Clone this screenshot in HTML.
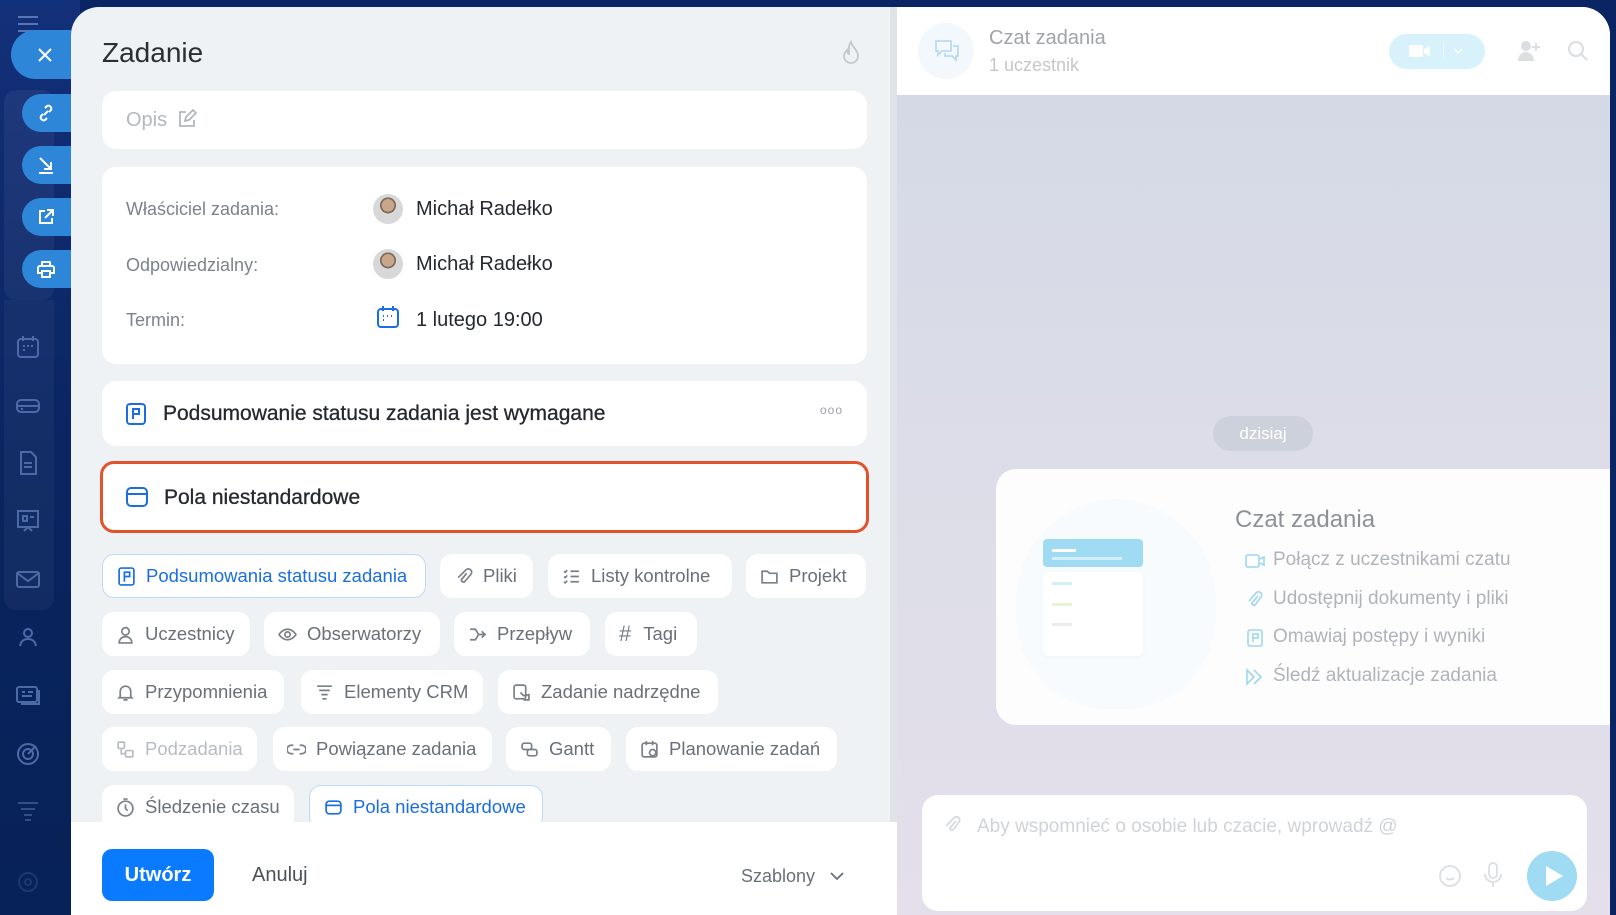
<!DOCTYPE html>
<html><head><meta charset="utf-8"><style>
*{box-sizing:border-box;margin:0;padding:0}
body{width:1616px;height:915px;overflow:hidden;background:#0b2463;font-family:"Liberation Sans",sans-serif;position:relative}
.side{position:absolute;left:0;top:0;width:80px;height:915px;background:linear-gradient(180deg,#13307a,#0a2560 50%,#072257)}
.si{position:absolute;left:14px;width:28px;height:28px;stroke:#4e6aa6;fill:none;stroke-width:2}
.fb{position:absolute;left:22px;width:60px;height:38px;border-radius:19px 0 0 19px;background:#2e86d8;display:flex;align-items:center;padding-left:14px}
.fb svg{width:20px;height:20px;stroke:#fff;fill:none;stroke-width:2}
.modal{position:absolute;left:71px;top:7px;width:826px;height:908px;background:#eef2f5;border-radius:28px 0 0 0;overflow:hidden}
.card{position:absolute;left:31px;width:765px;background:#fff;border-radius:14px}
.lbl{position:absolute;left:24px;font-size:18px;color:#7c838c}
.val{position:absolute;left:314px;font-size:20px;color:#25292e}
.av{position:absolute;left:271px;width:30px;height:30px;border-radius:50%;background:radial-gradient(circle at 50% 38%,#c9a58a 0 26%,#7b6a5d 27% 33%,#d8d8d8 34%)}
.chip{position:absolute;height:44px;background:#fff;border-radius:12px;font-size:18.5px;color:#6a7078;display:flex;align-items:center;padding-left:14px;white-space:nowrap}
.chip svg{width:19px;height:19px;stroke:#7a8088;fill:none;stroke-width:1.6;margin-right:10px;flex:none}
.chip.act{color:#1a6ee0;border:1px solid #bfd9f5}
.chip.act svg{stroke:#1a6ee0}
.foot{position:absolute;left:0;top:815px;width:826px;height:93px;background:#fff}
.right{position:absolute;left:897px;top:7px;width:713px;height:908px;background:linear-gradient(180deg,#d3d8e6,#dcdde8 50%,#e4dfea);border-radius:0 28px 0 0;overflow:hidden}
.hdr{position:absolute;left:0;top:0;width:713px;height:88px;background:#fff}
.it{position:absolute;left:376px;font-size:19px;color:#b0b4b8}
.it svg{position:absolute;left:-28px;top:2px;width:20px;height:20px;stroke:#9dd6ee;fill:none;stroke-width:1.6}
</style></head><body>
<div class="side">
<svg style="position:absolute;left:16px;top:14px" width="24" height="20" stroke="#5a76b0" stroke-width="2"><path d="M2 3h20M2 10h20M2 17h20"/></svg>
<div style="position:absolute;left:4px;top:90px;width:50px;height:210px;background:rgba(255,255,255,.05);border-radius:12px"></div>
<div style="position:absolute;left:4px;top:300px;width:50px;height:310px;background:rgba(255,255,255,.04);border-radius:0 0 12px 12px"></div>
<svg class="si" style="top:333px" viewBox="0 0 28 28"><rect x="4" y="6" width="20" height="18" rx="3"/><path d="M9 3v5M19 3v5M9 13h2M13 13h2M17 13h2M9 17h2"/></svg>
<svg class="si" style="top:391px" viewBox="0 0 28 28"><rect x="3" y="9" width="22" height="12" rx="4"/><path d="M3 15h22M7 18h2"/></svg>
<svg class="si" style="top:449px" viewBox="0 0 28 28"><path d="M7 3h10l5 5v17H7z M10 14h8M10 18h8"/></svg>
<svg class="si" style="top:507px" viewBox="0 0 28 28"><rect x="4" y="4" width="20" height="16"/><path d="M9 9h4v5H9zM16 10h4M10 24l4-4 4 4"/></svg>
<svg class="si" style="top:565px" viewBox="0 0 28 28"><rect x="3" y="7" width="22" height="15" rx="2"/><path d="M3 8l11 8 11-8"/></svg>
<svg class="si" style="top:623px" viewBox="0 0 28 28"><circle cx="14" cy="10" r="4"/><path d="M6 23c1-5 4-7 8-7s7 2 8 7"/></svg>
<svg class="si" style="top:681px" viewBox="0 0 28 28"><rect x="3" y="6" width="20" height="15" rx="2"/><path d="M8 11h3M14 11h5M8 15h10M25 9v14H7"/></svg>
<svg class="si" style="top:739px" viewBox="0 0 28 28"><circle cx="14" cy="15" r="10"/><circle cx="14" cy="15" r="5"/><path d="M14 15l8-8"/></svg>
<svg class="si" style="top:797px;opacity:.6" viewBox="0 0 28 28"><path d="M4 6h20M7 12h14M10 18h8M11 23h6"/></svg>
<svg class="si" style="top:868px;opacity:.3" viewBox="0 0 28 28"><circle cx="14" cy="14" r="9"/><circle cx="14" cy="14" r="3"/></svg>
</div>
<div class="fb" style="left:11px;top:30px;height:49px;border-radius:25px 0 0 25px;padding-left:24px"><svg viewBox="0 0 20 20"><path d="M4 4l12 12M16 4L4 16"/></svg></div>
<div class="fb" style="top:94px"><svg viewBox="0 0 20 20"><path d="M8 12l4-4M9 5l2-2a3 3 0 014 4l-2 2M11 15l-2 2a3 3 0 01-4-4l2-2"/></svg></div>
<div class="fb" style="top:146px"><svg viewBox="0 0 20 20"><path d="M4 3l11 11M15 7v7H8M3 18h14"/></svg></div>
<div class="fb" style="top:198px"><svg viewBox="0 0 20 20"><path d="M9 4H4v12h12v-5M11 3h6v6M17 3l-8 8"/></svg></div>
<div class="fb" style="top:250px"><svg viewBox="0 0 20 20"><path d="M6 7V3h8v4M4 7h12a2 2 0 012 2v5h-4M6 14H2V9a2 2 0 012-2M6 12h8v6H6z"/></svg></div>

<div class="modal">
<div style="position:absolute;left:31px;top:30px;font-size:28px;color:#2b2f33">Zadanie</div>
<svg style="position:absolute;left:768px;top:33px" width="24" height="26" viewBox="0 0 24 26" fill="none" stroke="#c4c8cd" stroke-width="1.8"><path d="M12 2c1 5 7 8 7 14a7 7 0 01-14 0c0-3 2-5 3-6 0 3 1 4 2 4 0-5-1-8 2-12z"/></svg>
<div class="card" style="top:84px;height:58px"><div style="position:absolute;left:24px;top:18px;font-size:20px;color:#b3b8be">Opis</div><svg style="position:absolute;left:75px;top:18px" width="20" height="20" fill="none" stroke="#b3b8be" stroke-width="1.8"><path d="M9 3H3v14h14v-6M8 12l1-4 7-7 3 3-7 7z"/></svg></div>
<div class="card" style="top:160px;height:197px">
<div class="lbl" style="top:32px">Właściciel zadania:</div><div class="av" style="top:27px"></div><div class="val" style="top:31px">Michał Radełko</div>
<div class="lbl" style="top:88px">Odpowiedzialny:</div><div class="av" style="top:82px"></div><div class="val" style="top:86px">Michał Radełko</div>
<div class="lbl" style="top:143px">Termin:</div>
<svg style="position:absolute;left:274px;top:138px" width="24" height="24" fill="none" stroke="#1a6ee0" stroke-width="2"><rect x="2" y="4" width="20" height="18" rx="3"/><path d="M7 1v5M17 1v5M7 11h1M11 11h1M15 11h1M7 15h1"/></svg>
<div class="val" style="top:142px">1 lutego 19:00</div></div>
<div class="card" style="top:374px;height:65px">
<svg style="position:absolute;left:23px;top:21px" width="22" height="24" fill="none" stroke="#1a6ee0" stroke-width="2"><rect x="2" y="2" width="18" height="20" rx="3"/><path d="M8 17V7h6v5H8"/></svg>
<div style="position:absolute;left:61px;top:21px;font-size:21px;color:#25292e;font-weight:500;-webkit-text-stroke:.3px #25292e">Podsumowanie statusu zadania jest wymagane</div>
<div style="position:absolute;right:24px;top:22px;font-size:12px;color:#9ba1a8;letter-spacing:1px">ooo</div></div>
<div style="position:absolute;left:29px;top:454px;width:769px;height:72px;border:3px solid #e2532b;border-radius:14px;background:#fff">
<svg style="position:absolute;left:22px;top:22px" width="24" height="22" fill="none" stroke="#1a6ee0" stroke-width="2"><rect x="2" y="2" width="20" height="18" rx="4"/><path d="M2 8h20"/></svg>
<div style="position:absolute;left:61px;top:22px;font-size:21px;color:#25292e;-webkit-text-stroke:.3px #25292e">Pola niestandardowe</div></div>

<div class="chip act" style="left:31px;top:547px;width:324px"><svg viewBox="0 0 18 18"><rect x="2" y="1" width="14" height="16" rx="2"/><path d="M7 14V5h5v4H7"/></svg>Podsumowania statusu zadania</div>
<div class="chip" style="left:369px;top:547px;width:93px"><svg viewBox="0 0 18 18"><path d="M12 6l-5 6a2 2 0 003 2l6-7a3 3 0 00-5-4L4 10"/></svg>Pliki</div>
<div class="chip" style="left:477px;top:547px;width:184px"><svg viewBox="0 0 18 18"><path d="M2 4l1 1 2-2M2 9l1 1 2-2M2 14l1 1 2-2M8 4h8M8 9h8M8 14h8"/></svg>Listy kontrolne</div>
<div class="chip" style="left:675px;top:547px;width:120px"><svg viewBox="0 0 18 18"><path d="M2 4h5l2 2h7v9H2z"/></svg>Projekt</div>
<div class="chip" style="left:31px;top:605px;width:148px"><svg viewBox="0 0 18 18"><circle cx="9" cy="6" r="3.5"/><path d="M3 17c0-4 3-6 6-6s6 2 6 6z"/></svg>Uczestnicy</div>
<div class="chip" style="left:193px;top:605px;width:176px"><svg viewBox="0 0 18 18"><path d="M1 9s3-5 8-5 8 5 8 5-3 5-8 5-8-5-8-5z"/><circle cx="9" cy="9" r="2.5"/></svg>Obserwatorzy</div>
<div class="chip" style="left:383px;top:605px;width:136px"><svg viewBox="0 0 18 18"><path d="M2 4h5l3 5-3 5H2M10 9h7M13 6l3 3-3 3"/></svg>Przepływ</div>
<div class="chip" style="left:534px;top:605px;width:92px"><span style="margin-right:12px;font-size:22px;color:#7a8088">#</span>Tagi</div>
<div class="chip" style="left:31px;top:663px;width:182px"><svg viewBox="0 0 18 18"><path d="M4 13V8a5 5 0 0110 0v5l1 1H3zM7 16h4"/></svg>Przypomnienia</div>
<div class="chip" style="left:230px;top:663px;width:182px"><svg viewBox="0 0 18 18"><path d="M2 3h14M4 7h10M6 11h6M7 15h4"/></svg>Elementy CRM</div>
<div class="chip" style="left:427px;top:663px;width:220px"><svg viewBox="0 0 18 18"><rect x="2" y="2" width="11" height="13" rx="2"/><path d="M8 9l3 3 5-1v5h-5"/></svg>Zadanie nadrzędne</div>
<div class="chip" style="left:31px;top:720px;width:155px;color:#b8bcc2"><svg viewBox="0 0 18 18" style="stroke:#b8bcc2"><rect x="2" y="2" width="6" height="6" rx="1"/><rect x="9" y="10" width="7" height="6" rx="1"/><path d="M5 8v5h4"/></svg>Podzadania</div>
<div class="chip" style="left:202px;top:720px;width:219px"><svg viewBox="0 0 18 18"><path d="M6 5H4a4 4 0 000 8h2M12 5h2a4 4 0 010 8h-2M6 9h6"/></svg>Powiązane zadania</div>
<div class="chip" style="left:435px;top:720px;width:105px"><svg viewBox="0 0 18 18"><rect x="2" y="3" width="9" height="6" rx="2"/><rect x="7" y="9" width="9" height="6" rx="2"/></svg>Gantt</div>
<div class="chip" style="left:555px;top:720px;width:211px"><svg viewBox="0 0 18 18"><rect x="2" y="3" width="14" height="13" rx="2"/><path d="M6 1v4M12 1v4"/><circle cx="12" cy="12" r="3"/></svg>Planowanie zadań</div>
<div class="chip" style="left:31px;top:778px;width:192px"><svg viewBox="0 0 18 18"><circle cx="9" cy="10" r="7"/><path d="M9 6v4l2 2M7 1h4"/></svg>Śledzenie czasu</div>
<div class="chip act" style="left:238px;top:778px;width:234px"><svg viewBox="0 0 18 18"><rect x="2" y="3" width="14" height="12" rx="3"/><path d="M2 7h14"/></svg>Pola niestandardowe</div>
<div style="position:absolute;right:0;top:0;width:7px;height:815px;background:#dfe3e7"></div>
<div class="foot">
<div style="position:absolute;left:31px;top:27px;width:112px;height:52px;border-radius:10px;background:#0a7bff;color:#fff;font-size:20px;font-weight:bold;display:flex;align-items:center;justify-content:center">Utwórz</div>
<div style="position:absolute;left:181px;top:42px;font-size:20px;color:#4a5058">Anuluj</div>
<div style="position:absolute;left:670px;top:44px;font-size:18px;color:#6a7078">Szablony</div>
<svg style="position:absolute;left:758px;top:48px" width="16" height="12" fill="none" stroke="#6a7078" stroke-width="1.8"><path d="M2 3l6 6 6-6"/></svg>
</div></div>

<div class="right">
<div class="hdr">
<div style="position:absolute;left:21px;top:16px;width:56px;height:56px;border-radius:50%;background:#f3f8fc"></div>
<svg style="position:absolute;left:36px;top:31px" width="28" height="26" fill="none" stroke="#b9dbf3" stroke-width="1.8"><path d="M3 3h15v10H9l-4 4v-4H3zM20 8h5v10h-2v4l-4-4h-7v-3"/></svg>
<div style="position:absolute;left:92px;top:20px;font-size:20px;color:#a0a3a7">Czat zadania</div>
<div style="position:absolute;left:92px;top:48px;font-size:18px;color:#c4c7ca">1 uczestnik</div>
<div style="position:absolute;left:492px;top:27px;width:96px;height:35px;border-radius:18px;background:#d7f2fb"></div>
<svg style="position:absolute;left:512px;top:37px" width="22" height="14" fill="#fff"><rect x="0" y="1" width="14" height="12" rx="2"/><path d="M15 5l6-3v10l-6-3z"/></svg>
<div style="position:absolute;left:546px;top:36px;width:1px;height:16px;background:#ecf8fc"></div>
<svg style="position:absolute;left:556px;top:40px" width="10" height="8" fill="none" stroke="#fff" stroke-width="1.5"><path d="M1 2l4 4 4-4"/></svg>
<svg style="position:absolute;left:620px;top:33px" width="26" height="22" fill="#dcdfe2"><circle cx="9" cy="6" r="5"/><path d="M1 21c0-6 4-9 8-9s8 3 8 9z"/><path d="M19 3v8M15 7h8" stroke="#dcdfe2" stroke-width="2"/></svg>
<svg style="position:absolute;left:670px;top:33px" width="22" height="22" fill="none" stroke="#dcdfe2" stroke-width="2.2"><circle cx="9" cy="9" r="7"/><path d="M14 14l6 6"/></svg>
</div>
<div style="position:absolute;left:316px;top:409px;width:100px;height:35px;border-radius:18px;background:#cdd1db;color:#fff;font-size:17px;display:flex;align-items:center;justify-content:center">dzisiaj</div>
<div style="position:absolute;left:99px;top:462px;width:640px;height:256px;border-radius:20px;background:rgba(255,255,255,.93)">
<div style="position:absolute;left:20px;top:30px;width:200px;height:210px;border-radius:50% 50% 45% 45%;background:#f7fbfd"></div>
<div style="position:absolute;left:47px;top:70px;width:100px;height:28px;border-radius:4px;background:#9fdcf3"></div>
<div style="position:absolute;left:56px;top:80px;width:24px;height:3px;background:#fff"></div>
<div style="position:absolute;left:56px;top:88px;width:70px;height:3px;background:#d4effa"></div>
<div style="position:absolute;left:47px;top:103px;width:100px;height:84px;border-radius:6px;background:#fff;box-shadow:0 1px 4px rgba(0,0,0,.04)"></div>
<div style="position:absolute;left:56px;top:113px;width:20px;height:3px;background:#d4effa"></div>
<div style="position:absolute;left:56px;top:134px;width:20px;height:3px;background:#eaf2d4"></div>
<div style="position:absolute;left:56px;top:154px;width:20px;height:3px;background:#ececec"></div>
<div style="position:absolute;left:239px;top:37px;font-size:24px;color:#8e9296">Czat zadania</div>
</div>
<div class="it" style="top:542px"><svg viewBox="0 0 20 20"><rect x="1" y="4" width="13" height="12" rx="2"/><path d="M15 8l4-2v8l-4-2"/></svg>Połącz z uczestnikami czatu</div>
<div class="it" style="top:581px"><svg viewBox="0 0 20 20"><path d="M13 6l-6 7a2 2 0 003 2l6-8a3 3 0 00-5-4L4 11"/></svg>Udostępnij dokumenty i pliki</div>
<div class="it" style="top:619px"><svg viewBox="0 0 20 20"><rect x="3" y="2" width="14" height="16" rx="2"/><path d="M8 14V6h5v4H8"/></svg>Omawiaj postępy i wyniki</div>
<div class="it" style="top:658px"><svg viewBox="0 0 20 20"><path d="M2 3l7 7-7 7zM9 3l7 7-7 7"/></svg>Śledź aktualizacje zadania</div>
<div style="position:absolute;left:25px;top:788px;width:665px;height:116px;border-radius:16px;background:#fff">
<svg style="position:absolute;left:20px;top:20px" width="22" height="22" fill="none" stroke="#d8dbde" stroke-width="1.8"><path d="M14 6l-6 7a2 2 0 003 2l6-8a3 3 0 00-5-4L4 11"/></svg>
<div style="position:absolute;left:55px;top:21px;font-size:19px;color:#d0d3d6">Aby wspomnieć o osobie lub czacie, wprowadź @</div>
<svg style="position:absolute;left:516px;top:69px" width="24" height="24" fill="none" stroke="#dcdfe2" stroke-width="1.8"><circle cx="12" cy="12" r="10"/><path d="M8 14c2 2 6 2 8 0M9 9h0M15 9h0"/></svg>
<svg style="position:absolute;left:561px;top:66px" width="20" height="28" fill="none" stroke="#dcdfe2" stroke-width="1.8"><rect x="6" y="2" width="8" height="15" rx="4"/><path d="M2 13a8 8 0 0016 0M10 21v5"/></svg>
<div style="position:absolute;left:605px;top:56px;width:50px;height:50px;border-radius:50%;background:#9fdcf3"></div>
<svg style="position:absolute;left:622px;top:70px" width="20" height="22" fill="#fff"><path d="M2 1l17 10L2 21z"/></svg>
</div>
</div>
</body></html>
